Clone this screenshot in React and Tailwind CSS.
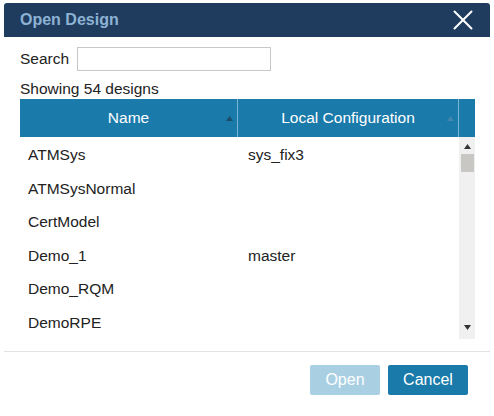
import { X } from "lucide-react";

const rows = [
  { name: "ATMSys", config: "sys_fix3" },
  { name: "ATMSysNormal", config: "" },
  { name: "CertModel", config: "" },
  { name: "Demo_1", config: "master" },
  { name: "Demo_RQM", config: "" },
  { name: "DemoRPE", config: "" },
];

function SortMark({ dark }) {
  return (
    <svg width="7" height="5" viewBox="0 0 7 5" className="absolute right-[4px] top-[17px]">
      <path d="M0 5 L3.5 0 L7 5 Z" fill={dark ? "#1d4d6a" : "#3f87ae"} />
    </svg>
  );
}

export default function App() {
  return (
    <div
      className="w-[494px] h-[416px] bg-white text-[#222] overflow-hidden"
      style={{ fontFamily: '"Liberation Sans", Arial, sans-serif' }}
    >
      {/* title bar */}
      <div className="mx-[4px] mt-[3px] h-[34px] bg-[#1f3c5e] rounded-t-[3px] flex items-center pl-[16px] pr-[10px]">
        <span className="flex-1 text-[16px] font-bold text-[#8db3d4]">Open Design</span>
        <X size={34} strokeWidth={1.4} color="#ffffff" />
      </div>

      {/* search */}
      <div className="flex items-center pl-[20px] mt-[10px] h-[24px]">
        <span className="text-[15.5px] w-[57px]">Search</span>
        <input className="w-[194px] h-[24px] border border-[#c8c8c8] outline-none px-1 text-[14px]" />
      </div>

      <div className="pl-[20px] mt-[9px] text-[15.5px] leading-[18px]">Showing 54 designs</div>

      {/* table */}
      <div className="ml-[20px] w-[455px] mt-[1px]">
        <div className="flex h-[38px] bg-[#1a7aaa] text-white text-[15.5px]">
          <div className="relative w-[218px] flex items-center justify-center border-r border-[#7ab6d4]">
            <span>Name</span>
            <SortMark dark />
          </div>
          <div className="relative w-[221px] flex items-center justify-center border-r border-[#7ab6d4]">
            <span>Local Configuration</span>
            <SortMark />
          </div>
          <div className="flex-1" />
        </div>
        <div className="flex h-[202px]">
          <div className="flex-1 pt-[1px]">
            {rows.map((r) => (
              <div key={r.name} className="flex items-center h-[33.5px] text-[15.5px]">
                <span className="w-[220px] pl-[8px]">{r.name}</span>
                <span className="pl-[8px]">{r.config}</span>
              </div>
            ))}
          </div>
          <div className="w-[16px] bg-[#f0f0f0] flex flex-col items-center">
            <svg width="7" height="5" viewBox="0 0 7 5" className="mt-[7px]">
              <path d="M0 5 L3.5 0 L7 5 Z" fill="#333" />
            </svg>
            <div className="w-[13px] h-[18px] bg-[#c9c7c3] mt-[5px]" />
            <div className="flex-1" />
            <svg width="7" height="5" viewBox="0 0 7 5" className="mb-[9px]">
              <path d="M0 0 L7 0 L3.5 5 Z" fill="#333" />
            </svg>
          </div>
        </div>
      </div>

      <div className="mx-[4px] mt-[12px] border-t border-[#e3e3e3]" />

      {/* footer */}
      <div className="flex justify-end gap-[8px] pr-[26px] mt-[13px]">
        <button className="w-[70px] h-[30px] bg-[#a9d0e2] text-white text-[16px] rounded-[2px]">Open</button>
        <button className="w-[80px] h-[30px] bg-[#1a7aaa] text-white text-[16px] rounded-[2px]">Cancel</button>
      </div>
    </div>
  );
}
